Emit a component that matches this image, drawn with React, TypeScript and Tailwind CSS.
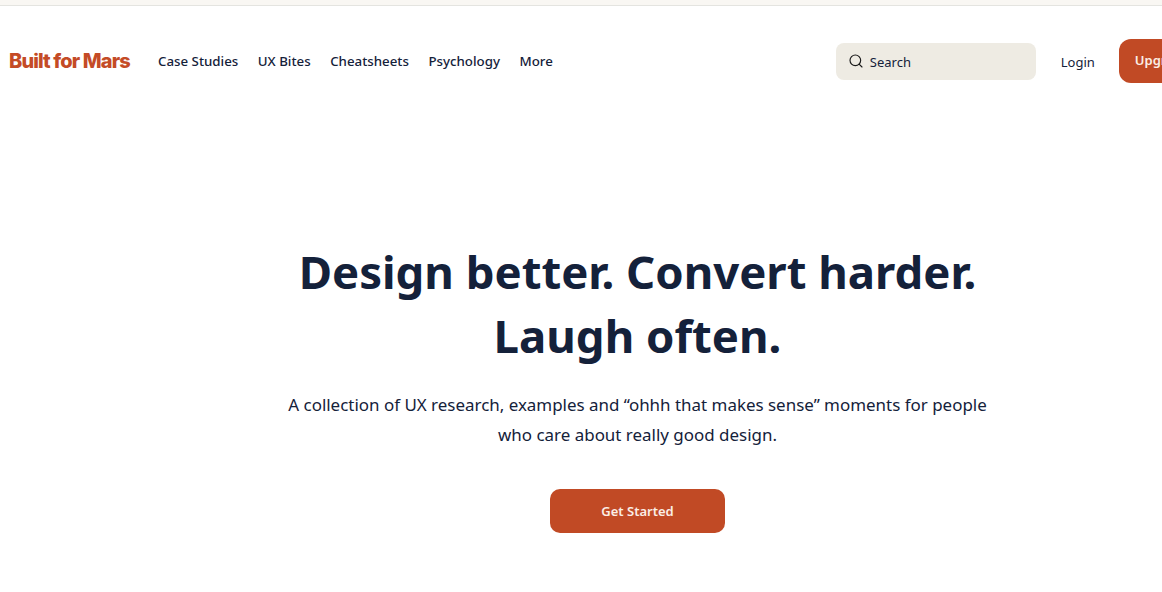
import { Search } from "lucide-react";

const links = ["Case Studies", "UX Bites", "Cheatsheets", "Psychology", "More"];

export default function App() {
  return (
    <div className="h-[592px] w-[1162px] overflow-hidden bg-white font-['Noto_Sans',sans-serif] text-[#14213a]">
      <div className="h-[6px] border-b border-[#e4e4e0] bg-[#f9f7f3]" />

      {/* Header */}
      <header className="flex h-[110px] w-[1300px] items-center pl-[9px]">
        <a className="w-[149px] font-['Inter',sans-serif] text-[20px] font-extrabold tracking-[-0.88px] text-[#c44b26]">
          Built for Mars
        </a>
        <nav className="flex gap-[19.5px] pt-px text-[13.3px] font-medium">
          {links.map((link) => (
            <a key={link}>{link}</a>
          ))}
        </nav>
        <div className="ml-[283px] flex h-[37px] w-[200px] items-center gap-[6px] rounded-lg bg-[#eeebe3] pl-[12px] text-[13px]">
          <Search size={16} strokeWidth={1.75} className="text-[#1a1a1a]" />
          <span className="pt-[3px]">Search</span>
        </div>
        <a className="ml-[25px] pt-[3px] text-[13px]">Login</a>
        <button className="ml-[24px] h-[44px] w-[120px] rounded-xl bg-[#c14a25] pl-4 text-left text-[13px] font-semibold text-[#fbeee6]">
          Upgrade
        </button>
      </header>

      {/* Hero */}
      <main className="flex w-[1275px] flex-col items-center pt-[123px]">
        <h1 className="text-center text-[45.5px] leading-[64px] font-bold">
          Design better. Convert harder.
          <br />
          Laugh often.
        </h1>
        <p className="mt-[23px] w-[720px] text-center text-[16.95px] leading-[30px]">
          A collection of UX research, examples and “ohhh that makes sense” moments for people who
          care about really good design.
        </p>
        <button className="mt-[39px] h-[44px] w-[175px] rounded-[10px] bg-[#c14a25] pt-px text-[13px] font-semibold text-[#fbeee6]">
          Get Started
        </button>
      </main>
    </div>
  );
}
